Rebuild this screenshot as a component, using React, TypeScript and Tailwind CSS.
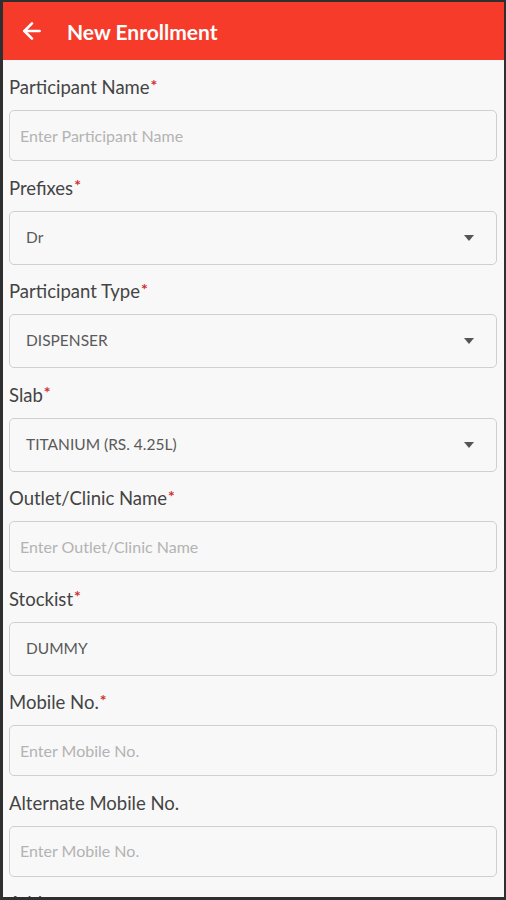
import { ArrowLeft } from "lucide-react";

type Field = {
  label: string;
  required?: boolean;
  kind: "input" | "select" | "value";
  text: string;
};

const fields: Field[] = [
  { label: "Participant Name", required: true, kind: "input", text: "Enter Participant Name" },
  { label: "Prefixes", required: true, kind: "select", text: "Dr" },
  { label: "Participant Type", required: true, kind: "select", text: "DISPENSER" },
  { label: "Slab", required: true, kind: "select", text: "TITANIUM (RS. 4.25L)" },
  { label: "Outlet/Clinic Name", required: true, kind: "input", text: "Enter Outlet/Clinic Name" },
  { label: "Stockist", required: true, kind: "value", text: "DUMMY" },
  { label: "Mobile No.", required: true, kind: "input", text: "Enter Mobile No." },
  { label: "Alternate Mobile No.", kind: "input", text: "Enter Mobile No." },
  { label: "Address", kind: "input", text: "Enter Address" },
];

function FormField({ field }: { field: Field }) {
  const isInput = field.kind === "input";
  return (
    <div className="flex flex-col">
      <label className="h-[22px] flex items-center text-[18.5px] leading-[22px] text-[#444]">
        {field.label}
        {field.required && <span className="text-[#d32f2f] font-bold text-[16px] ml-[1px] -mt-[5px]">*</span>}
      </label>
      <div
        className={`mt-[12px] flex items-center rounded-[5px] border-[1.5px] border-[#cfcfcf] bg-[#f8f8f8] ${
          isInput ? "h-[51px] pl-[10px]" : "h-[54px] pl-[16px]"
        } pr-[22px]`}
      >
        <span
          className={
            isInput
              ? "flex-1 text-[16px] text-[#b3b3b3]"
              : "flex-1 text-[15.5px] text-[#5a5a5a]"
          }
        >
          {field.text}
        </span>
        {field.kind === "select" && (
          <svg width="10" height="6" viewBox="0 0 10 6" className="text-[#555]">
            <path d="M0 0h10L5 6z" fill="currentColor" />
          </svg>
        )}
      </div>
    </div>
  );
}

export default function App() {
  return (
    <div
      className="w-[506px] h-[900px] overflow-hidden bg-[#f8f8f8] border-l-[3px] border-r-2 border-t-2 border-b-[3px] border-[#2f2f2f] flex flex-col"
      style={{ fontFamily: "Lato, 'Open Sans', sans-serif" }}
    >
      <header className="h-[58px] shrink-0 bg-[#f63b2b] flex items-center pl-[16px]">
        <ArrowLeft className="text-white" size={26} strokeWidth={2.4} />
        <h1 className="ml-[22px] mt-[2px] text-white font-bold text-[21px]">New Enrollment</h1>
      </header>
      <main className="flex-1 overflow-hidden pl-[6px] pr-[7px] pt-[16px] flex flex-col gap-[15.5px]">
        {fields.map((f) => (
          <FormField key={f.label} field={f} />
        ))}
      </main>
    </div>
  );
}
